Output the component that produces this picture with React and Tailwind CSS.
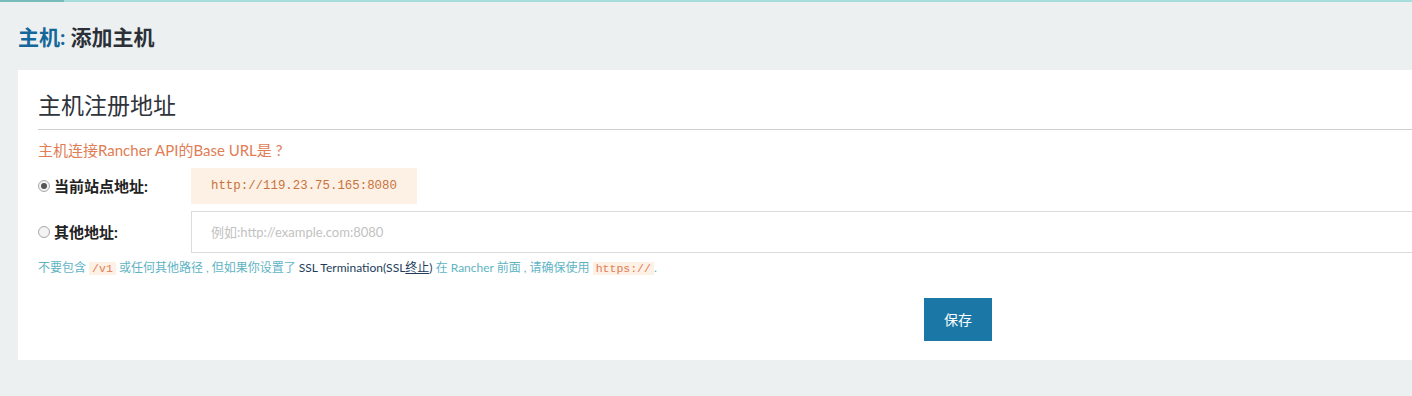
const Radio = ({ checked }) => (
  <span className="w-[12px] h-[12px] rounded-full border border-[#a8a8a8] bg-[#f3f3f3] flex items-center justify-center shrink-0">
    {checked && <span className="w-[6px] h-[6px] rounded-full bg-[#555]" />}
  </span>
);

const mono = { fontFamily: '"Liberation Mono", monospace' };

const App = () => {
  return (
    <div
      className="w-[1412px] h-[396px] overflow-hidden bg-[#edf0f0]"
      style={{ fontFamily: 'Lato, "Noto Sans CJK SC", sans-serif' }}
    >
      {/* top accent bar */}
      <div className="flex h-[2px]">
        <div className="w-[64px] bg-[#79bcbc]" />
        <div className="flex-1 bg-[#a6dcdc]" />
      </div>

      {/* page header */}
      <h1 className="pl-[18px] pt-[23px] h-[68px] text-[21px] font-bold leading-[24px] text-[#2b3038]">
        <span className="text-[#14679a]">主机:</span> 添加主机
      </h1>

      {/* card */}
      <section className="ml-[18px] w-[1880px] bg-white pt-[20px] pb-[19px] px-[20px]">
        <h2 className="text-[23px] leading-[30px] text-[#2f333a] pb-[9px] border-b border-[#cfcfcf]">
          主机注册地址
        </h2>

        <p className="mt-[10px] text-[15px] leading-[20px] text-[#e07d55]">
          主机连接Rancher API的Base URL是 ?
        </p>

        <div className="mt-[8px] flex items-center">
          <label className="w-[153px] flex items-center gap-[4px] text-[15px] font-bold text-[#222]">
            <Radio checked />
            当前站点地址:
          </label>
          <div
            className="h-[36px] px-[20px] flex items-center bg-[#fdf0e5] text-[12.4px] text-[#c8733c]"
            style={mono}
          >
            http://119.23.75.165:8080
          </div>
        </div>

        <div className="mt-[7px] flex items-center">
          <label className="w-[153px] flex items-center gap-[4px] text-[15px] font-bold text-[#222]">
            <Radio />
            其他地址:
          </label>
          <input
            className="flex-1 h-[42px] px-[19px] border border-[#dcdcdc] text-[13px] placeholder:text-[#c2c2c2] outline-none"
            placeholder="例如:http://example.com:8080"
          />
        </div>

        <p className="mt-[6px] text-[12px] leading-[18px] text-[#5fb4c4]">
          不要包含 <code className="px-[3px] bg-[#fdf0e5] text-[#e07d55] text-[11.5px]" style={mono}>/v1</code>{" "}
          或任何其他路径 , 但如果你设置了{" "}
          <span className="text-[#223d5c]">
            SSL Termination(SSL<span className="underline">终止</span>)
          </span>{" "}
          在 Rancher 前面 , 请确保使用{" "}
          <code className="px-[3px] bg-[#fdf0e5] text-[#e07d55] text-[11.5px]" style={mono}>https://</code>
          .
        </p>

        <div className="mt-[20px] flex justify-center">
          <button className="w-[68px] h-[43px] bg-[#1b78a6] text-white text-[14px]">
            保存
          </button>
        </div>
      </section>
    </div>
  );
};

export default App;
